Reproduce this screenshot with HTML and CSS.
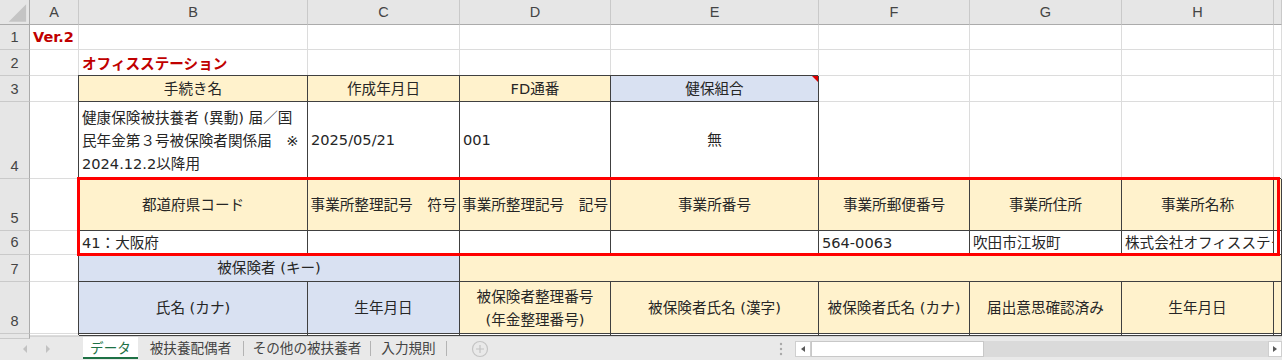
FILE: index.html
```html
<!DOCTYPE html>
<html lang="ja">
<head>
<meta charset="utf-8">
<title>Sheet</title>
<link rel="stylesheet" href="styles.css">
</head>
<body>
<div class="sheet">
  <div class="corner"><svg width="30" height="25" viewBox="0 0 30 25"><polygon points="9,22 27,22 27,4" fill="#c4c4c4"/></svg></div>
  <div class="colh">A</div><div class="colh">B</div><div class="colh">C</div><div class="colh">D</div><div class="colh">E</div><div class="colh">F</div><div class="colh">G</div><div class="colh">H</div><div class="colh"></div>

  <div class="rowh">1</div><div class="title ver">Ver.2</div><div></div><div></div><div></div><div></div><div></div><div></div><div></div><div></div>

  <div class="rowh">2</div><div></div><div class="title">オフィスステーション</div><div></div><div></div><div></div><div></div><div></div><div></div><div></div>

  <div class="rowh">3</div><div></div>
  <div class="bd hy ctr">手続き名</div>
  <div class="bd hy ctr">作成年月日</div>
  <div class="bd hy ctr">FD通番</div>
  <div class="bd bl ctr cmt">健保組合</div>
  <div></div><div></div><div></div><div></div>

  <div class="rowh">4</div><div></div>
  <div class="bd wrap"><span>健康保険被扶養者 (異動) 届／国<br>民年金第３号被保険者関係届　※<br>2024.12.2以降用</span></div>
  <div class="bd">2025/05/21</div>
  <div class="bd">001</div>
  <div class="bd ctr">無</div>
  <div></div><div></div><div></div><div></div>

  <div class="rowh">5</div><div></div>
  <div class="bd hy ctr">都道府県コード</div>
  <div class="bd hy ctr">事業所整理記号　符号</div>
  <div class="bd hy ctr">事業所整理記号　記号</div>
  <div class="bd hy ctr">事業所番号</div>
  <div class="bd hy ctr">事業所郵便番号</div>
  <div class="bd hy ctr">事業所住所</div>
  <div class="bd hy ctr">事業所名称</div>
  <div class="bd hy"></div>

  <div class="rowh">6</div><div></div>
  <div class="bd">41：大阪府</div>
  <div class="bd"></div>
  <div class="bd"></div>
  <div class="bd"></div>
  <div class="bd">564-0063</div>
  <div class="bd">吹田市江坂町</div>
  <div class="bd">株式会社オフィスステーション</div>
  <div class="bd"></div>

  <div class="rowh">7</div><div></div>
  <div class="bd bl ctr span2">被保険者 (キー)</div>
  <div class="bd hy span6"></div>

  <div class="rowh">8</div><div></div>
  <div class="bd bl ctr">氏名 (カナ)</div>
  <div class="bd bl ctr">生年月日</div>
  <div class="bd hy ctr wrap"><span>被保険者整理番号<br>(年金整理番号)</span></div>
  <div class="bd hy ctr">被保険者氏名 (漢字)</div>
  <div class="bd hy ctr">被保険者氏名 (カナ)</div>
  <div class="bd hy ctr">届出意思確認済み</div>
  <div class="bd hy ctr">生年月日</div>
  <div class="bd hy"></div>

  <div class="rowh"></div><div></div>
  <div class="bd"></div><div class="bd"></div><div class="bd"></div><div class="bd"></div><div class="bd"></div><div class="bd"></div><div class="bd"></div><div class="bd"></div>

  <div class="selection"></div>
</div>

<div class="tabbar">
  <div class="nav">
    <svg width="83" height="23" viewBox="0 0 83 23"><polygon points="27,8 27,16 23,12" fill="#c2c2c2"/><polygon points="46,8 46,16 50,12" fill="#c2c2c2"/></svg>
  </div>
  <div class="tab active">データ</div>
  <div class="tab t2">被扶養配偶者</div><span class="sep"></span>
  <div class="tab t3">その他の被扶養者</div><span class="sep"></span>
  <div class="tab t4">入力規則</div><span class="sep"></span>
  <div class="add">
    <svg width="18" height="18" viewBox="0 0 18 18"><circle cx="9" cy="9" r="7.5" fill="none" stroke="#c4c4c4" stroke-width="1.2"/><path d="M9 5v8M5 9h8" stroke="#c4c4c4" stroke-width="1.2"/></svg>
  </div>
  <div class="spacer"></div>
  <div class="dots">
    <svg width="10" height="16" viewBox="0 0 10 16"><circle cx="5" cy="3" r="1.2" fill="#a8a8a8"/><circle cx="5" cy="8" r="1.2" fill="#a8a8a8"/><circle cx="5" cy="13" r="1.2" fill="#a8a8a8"/></svg>
  </div>
  <div class="hscroll">
    <div class="sbtn"><svg width="14" height="14" viewBox="0 0 14 14"><polygon points="9,4 9,10 5,7" fill="#5a5a5a"/></svg></div>
    <div class="thumb"></div>
    <div class="track"></div>
    <div class="sbtn right"><svg width="12" height="14" viewBox="0 0 12 14"><polygon points="4,4 4,10 8,7" fill="#5a5a5a"/></svg></div>
  </div>
</div>
</body>
</html>
```

FILE: styles.css
```css
* { box-sizing: border-box; }
html, body { margin: 0; padding: 0; }
body {
  width: 1282px;
  height: 360px;
  overflow: hidden;
  background: #ffffff;
  font-family: "DejaVu Sans", "Noto Sans CJK JP", sans-serif;
  font-size: 14.6px;
  color: #262626;
}

.sheet {
  position: relative;
  display: grid;
  grid-template-columns: 30px 49px 229px 152px 151px 208px 151px 152px 152px 8px;
  grid-template-rows: 25px 25px 26px 26px 77px 52px 24px 27px 52px 2px;
}

.sheet > div {
  display: flex;
  align-items: center;
  min-width: 0;
  padding: 0 3px;
  overflow: hidden;
  white-space: nowrap;
  line-height: 18px;
  background: #ffffff;
  border-right: 1px solid #dcdcdc;
  border-bottom: 1px solid #dcdcdc;
}

.sheet > .corner {
  padding: 0;
  background: #e6e6e6;
  border-right-color: #ababab;
  border-bottom-color: #ababab;
}

.sheet > .colh {
  justify-content: center;
  background: #e6e6e6;
  border-right-color: #c9c9c9;
  border-bottom-color: #ababab;
  font-family: "Liberation Sans", "DejaVu Sans", sans-serif;
  font-size: 14.5px;
  color: #444444;
}

.sheet > .rowh {
  justify-content: center;
  align-items: flex-end;
  padding: 0 0 4px 0;
  line-height: 16px;
  background: #e6e6e6;
  border-right-color: #ababab;
  border-bottom-color: #c9c9c9;
  font-family: "Liberation Sans", "DejaVu Sans", sans-serif;
  font-size: 14.5px;
  color: #444444;
}

.title {
  color: #c00000;
  font-weight: bold;
  font-family: "Noto Sans CJK JP", sans-serif;
}
.sheet > .ver {
  font-family: "DejaVu Sans", sans-serif;
  font-size: 14.5px;
}

.sheet > .bd {
  border-right-color: #404040;
  border-bottom-color: #404040;
  box-shadow: -1px -1px 0 0 #404040;
}

.sheet > .hy { background: #fff2cc; }
.sheet > .bl { background: #d9e1f2; }
.sheet > .ctr { justify-content: center; text-align: center; }

.sheet > .wrap {
  white-space: normal;
  line-height: 23px;
}

.span2 { grid-column: span 2; }
.span6 { grid-column: span 6; }

.cmt { position: relative; }
.cmt::after {
  content: "";
  position: absolute;
  top: 0;
  right: 0;
  border-top: 6px solid #e00000;
  border-left: 6px solid transparent;
}

.sheet > .selection {
  position: absolute;
  grid-row: 6 / 8;
  grid-column: 3 / 11;
  top: -2px;
  left: -2px;
  right: 2px;
  bottom: -1px;
  padding: 0;
  background: transparent;
  border: 3px solid #ff0000;
  pointer-events: none;
  z-index: 3;
}

/* sheet tabs + scrollbar */
.tabbar {
  display: flex;
  align-items: flex-start;
  height: 24px;
  background: #e9e9e9;
  border-top: 1px solid #d4d4d4;
  font-family: "Noto Sans CJK JP", sans-serif;
  font-size: 13.6px;
  color: #444444;
}

.nav { width: 83px; height: 23px; }
.nav svg { display: block; }

.tab {
  display: flex;
  align-items: center;
  justify-content: center;
  height: 22px;
  padding-bottom: 2px;
  white-space: nowrap;
}
.tab.active {
  width: 55px;
  background: #ffffff;
  color: #1e7145;
  border-bottom: 2px solid #1e7145;
  padding-bottom: 0;
}
.tab.t2 { width: 105px; }
.tab.t3 { width: 126px; }
.tab.t4 { width: 75px; }

.sep {
  width: 1px;
  height: 15px;
  margin-top: 4px;
  background: #b4b4b4;
}

.add {
  width: 66px;
  height: 23px;
  display: flex;
  align-items: center;
  justify-content: center;
}
.add svg { display: block; margin-top: 1px; }

.spacer { flex: 1; }

.dots {
  width: 10px;
  height: 23px;
  display: flex;
  align-items: center;
}
.dots svg { display: block; }

.hscroll {
  display: flex;
  width: 487px;
  height: 16px;
  margin-top: 4px;
  margin-left: 9px;
  background: #dadada;
}
.sbtn {
  width: 16px;
  height: 16px;
  background: #ffffff;
  border: 1px solid #cfcfcf;
  display: flex;
  align-items: center;
  justify-content: center;
}
.sbtn.right { width: 14px; }
.sbtn svg { display: block; }
.thumb {
  width: 173px;
  height: 16px;
  background: #ffffff;
  border: 1px solid #c8c8c8;
}
.track { flex: 1; }
```
